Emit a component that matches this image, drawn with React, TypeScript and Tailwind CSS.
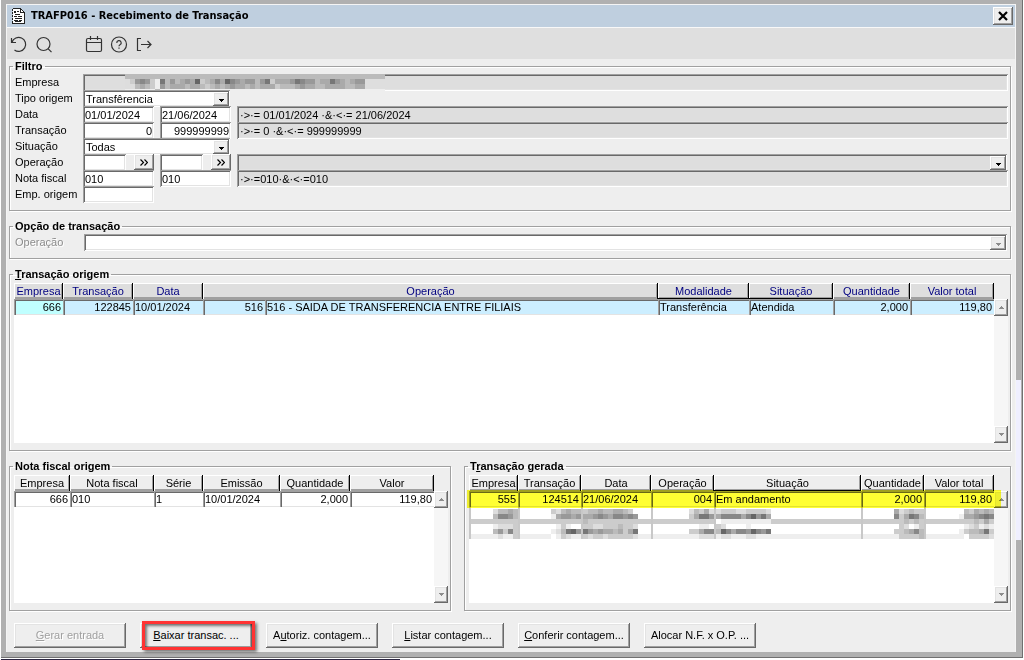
import { useState } from "react";
import type { ReactNode } from "react";
import clsx from "clsx";

const sunken =
  "shadow-[inset_1px_1px_0_#a0a0a0,inset_-1px_-1px_0_#ffffff,inset_2px_2px_0_#696969,inset_-2px_-2px_0_#e3e3e3]";
const raised =
  "shadow-[inset_-1px_-1px_0_#696969,inset_1px_1px_0_#ffffff,inset_-2px_-2px_0_#a0a0a0,inset_2px_2px_0_#e3e3e3]";
const cellEdge = "shadow-[inset_1px_1px_0_#a0a0a0,inset_2px_2px_0_#696969,inset_0_-1px_0_#e3e3e3]";
const iconButton = "flex size-[18px] items-center justify-center text-[#333333]";

type Column = {
  title: string;
  width?: string;
  span?: number;
  sorted?: boolean;
};

type Cell = {
  text: string;
  right?: boolean;
  tone?: string;
};

const originColumns: Column[] = [
  { title: "Empresa" },
  { title: "Transação" },
  { title: "Data" },
  { title: "Operação", span: 2 },
  { title: "Modalidade", sorted: true },
  { title: "Situação", sorted: true },
  { title: "Quantidade" },
  { title: "Valor total" },
];

const originWidths = ["w-[49px]", "w-[70px]", "w-[70px]", "w-[62px]", "", "w-[91px]", "w-[84px]", "w-[77px]", "w-[84px]"];

const originRow: Cell[] = [
  { text: "666", right: true, tone: "bg-[#c0ffff]" },
  { text: "122845", right: true },
  { text: "10/01/2024" },
  { text: "516", right: true },
  { text: "516 - SAIDA DE TRANSFERENCIA ENTRE FILIAIS" },
  { text: "Transferência" },
  { text: "Atendida" },
  { text: "2,000", right: true },
  { text: "119,80", right: true },
];

const invoiceColumns: Column[] = [
  { title: "Empresa" },
  { title: "Nota fiscal" },
  { title: "Série" },
  { title: "Emissão" },
  { title: "Quantidade" },
  { title: "Valor" },
];

const invoiceWidths = ["w-[56px]", "", "w-[49px]", "w-[77px]", "w-[70px]", "w-[84px]"];

const invoiceRow: Cell[] = [
  { text: "666", right: true },
  { text: "010" },
  { text: "1" },
  { text: "10/01/2024" },
  { text: "2,000", right: true },
  { text: "119,80", right: true },
];

const generatedColumns: Column[] = [
  { title: "Empresa" },
  { title: "Transação" },
  { title: "Data" },
  { title: "Operação" },
  { title: "Situação", sorted: true },
  { title: "Quantidade" },
  { title: "Valor total" },
];

const generatedWidths = ["w-[49px]", "w-[63px]", "w-[70px]", "w-[63px]", "", "w-[63px]", "w-[70px]"];

const generatedRow: Cell[] = [
  { text: "555", right: true },
  { text: "124514", right: true },
  { text: "21/06/2024" },
  { text: "004", right: true },
  { text: "Em andamento" },
  { text: "2,000", right: true },
  { text: "119,80", right: true },
];

// One character is one 5px block, read as a grey level from 0 (black) to f (white)
const companyMask = [
  "bbbbbbbbbbbbbbbbbbbbbbbbbbbbbbbbbbbbbbbbbbbbbbbbbbbb",
  "dc989ce7b9ba9a6cba8a689a99b97caaa97899baa79aba99....",
  "ddbabce9baaabaabcbaba9aababaaacbbba9aabbaaaabbaa....",
  "eeeeeebeeeeeeeeeeeeeeeeeeeeeeeeeeeeeeeeeeeeeeeeeeeee",
];

const rowMasks = [
  { right: true, rows: ["dbbab", "b889b", "ccccc", "edddc", "b9c8c", "edeec"] },
  { right: true, rows: ["cdbabb", "ea99a9", "cccccc", "feceff", "edb769", "fecdee"] },
  { right: false, rows: ["cbbabbaabc.", "aa989a88989", "bcccccccccc", "ccddcccbccd", "79a9aabaca7", "cdccdcccccd"] },
  { right: true, rows: ["dbcad", "ca779", "ccccc", "ffeef", "cca88", "eeddd"] },
  { right: false, rows: ["dcccddccccd", "a8888a8697a", "feeeeeeeeee", "cdffffeffff", "b68a8896897", "eddeeeddeee"] },
  { right: true, rows: ["adcbcc", "8ca78b", "ccbcbc", "fcdfec", "ccba8b", "eccccb"] },
  { right: true, rows: ["fbcabab", "eaa9878", "cccbcac", "fedcede", "ecbba7c", "efccccd"] },
];

const filterRow = "flex h-4 items-start";
const filterLabel = "w-[68px] shrink-0 leading-4";
const field = clsx(sunken, "h-[17px] bg-white px-[2px] pt-px text-[11px] leading-4 outline-none");
const readOnlyField = clsx(
  sunken,
  "h-[17px] min-w-0 flex-1 bg-[#dedede] px-[3px] pt-px text-[11px] leading-4 outline-none",
);

function Mosaic({ rows, className }: { rows: string[]; className?: string }) {
  const columns = Math.max(...rows.map((row) => row.length));

  return (
    <svg
      width={columns * 5}
      height={rows.length * 5}
      shapeRendering="crispEdges"
      className={clsx("block shrink-0", className)}
      aria-hidden="true"
    >
      {rows.flatMap((row, y) =>
        row.split("").map((level, x) =>
          level === "." ? null : (
            <rect key={`${x}-${y}`} x={x * 5} y={y * 5} width={5} height={5} fill={`#${level.repeat(6)}`} />
          ),
        ),
      )}
    </svg>
  );
}

function Group({ title, className, children }: { title: ReactNode; className?: string; children: ReactNode }) {
  return (
    <fieldset className="min-w-0 border border-[#a0a0a0] shadow-[1px_1px_0_#ffffff,inset_1px_1px_0_#ffffff]">
      <legend className="ml-[3px] h-3 px-[2px] text-[11px] leading-3 font-bold">{title}</legend>
      <div className={className}>{children}</div>
    </fieldset>
  );
}

function Arrow({ up, muted }: { up?: boolean; muted?: boolean }) {
  return (
    <svg
      width="5"
      height="3"
      viewBox="0 0 5 3"
      shapeRendering="crispEdges"
      className={muted ? "text-[#8c8c8c]" : "text-black"}
      aria-hidden="true"
    >
      <path d={up ? "M2 0h1v1h1v1h1v1H0V2h1V1h1z" : "M0 0h5v1H4v1H3v1H2V2H1V1H0z"} fill="currentColor" />
    </svg>
  );
}

function DropDown({
  id,
  options,
  className,
  disabled,
  label,
}: {
  id: string;
  options: string[];
  className?: string;
  disabled?: boolean;
  label?: string;
}) {
  return (
    <div className={clsx("grid h-[17px] items-stretch", className)}>
      <select
        id={id}
        aria-label={label}
        disabled={disabled}
        className={clsx(
          sunken,
          "col-start-1 row-start-1 h-[17px] w-full appearance-none bg-transparent px-[3px] text-[11px] leading-4 outline-none",
        )}
      >
        {options.map((option) => (
          <option key={option}>{option}</option>
        ))}
      </select>
      <span
        className={clsx(
          raised,
          "pointer-events-none col-start-1 row-start-1 mr-px mt-[2px] mb-px flex w-4 items-center justify-center justify-self-end bg-[#eeeeee] pt-[3px]",
        )}
      >
        <Arrow muted={disabled} />
      </span>
    </div>
  );
}

function ScrollBar() {
  return (
    <div className="flex w-[14px] shrink-0 flex-col justify-between bg-[#f6f6f6]">
      <button type="button" aria-label="Rolar para cima" className={clsx(raised, "flex h-[17px] items-center justify-center bg-[#eeeeee]")}>
        <Arrow up muted />
      </button>
      <button type="button" aria-label="Rolar para baixo" className={clsx(raised, "flex h-[17px] items-center justify-center bg-[#eeeeee]")}>
        <Arrow muted />
      </button>
    </div>
  );
}

function Grid({
  columns,
  widths,
  row,
  blue,
  height,
  children,
}: {
  columns: Column[];
  widths: string[];
  row: Cell[];
  blue?: boolean;
  height: string;
  children?: ReactNode;
}) {
  return (
    <div className={clsx("flex", height)}>
      <div className="min-w-0 flex-1 bg-[linear-gradient(#eeeeee_16px,#ffffff_16px)]">
        <table className="w-full table-fixed border-separate border-spacing-0">
          <colgroup>
            {widths.map((width, index) => (
              <col key={index} className={width} />
            ))}
          </colgroup>
          <thead>
            <tr className="h-4">
              {columns.map((column) => (
                <th
                  key={column.title}
                  colSpan={column.span}
                  className={clsx(
                    "h-4 overflow-hidden p-0 text-center font-normal leading-4 whitespace-nowrap",
                    blue ? "bg-[#dedede] text-[#000080]" : "bg-[#eeeeee]",
                    column.sorted
                      ? "shadow-[inset_-1px_-1px_0_#000000,inset_1px_1px_0_#ffffff,inset_-2px_-2px_0_#a0a0a0]"
                      : "shadow-[inset_-1px_0_0_#000000,inset_1px_1px_0_#ffffff,inset_-2px_-2px_0_#a0a0a0]",
                  )}
                >
                  {column.title}
                </th>
              ))}
            </tr>
          </thead>
          <tbody>
            <tr className="h-4">
              {row.map((cell, index) => (
                <td
                  key={index}
                  className={clsx(
                    cellEdge,
                    "h-4 overflow-hidden py-0 pr-[2px] pl-[2px] leading-4 whitespace-nowrap",
                    cell.right && "text-right",
                    cell.tone ?? (blue ? "bg-[#cceeff]" : "bg-white"),
                  )}
                >
                  {cell.text}
                </td>
              ))}
            </tr>
            {children}
          </tbody>
        </table>
      </div>
      <div className="flex pt-4">
        <ScrollBar />
      </div>
    </div>
  );
}

function CommandButton({ children, disabled }: { children: ReactNode; disabled?: boolean }) {
  return (
    <button
      type="button"
      disabled={disabled}
      className={clsx(
        raised,
        "h-[25px] w-28 bg-[#eeeeee] pb-px text-[11px]",
        disabled ? "text-[#a0a0a0] [text-shadow:1px_1px_0_#ffffff]" : "text-black",
      )}
    >
      {children}
    </button>
  );
}

function TitleBar() {
  return (
    <header className="flex h-[22px] items-center bg-[#bfcfdf] pr-[2px] pl-[5px]">
      <svg width="14" height="16" viewBox="0 0 14 16" shapeRendering="crispEdges" aria-hidden="true">
        <path d="M1 1h8l4 4v11H1z" fill="#fff" />
        <path d="M1 0h8v1H1zM0 1h1v2H0zM0 4h1v2H0zM0 7h1v2H0zM0 10h1v2H0zM0 13h1v3H0zM1 15h12v1H1zM12 5h1v11h-1zM9 1h1v1H9zM10 2h1v1h-1zM11 3h1v1h-1zM8 1h1v4H8zM8 4h5v1H8z" fill="#222" />
        <path d="M2 3h2v2H2zM5 3h2v1H5zM3 6h5v1H3zM2 8h3v1H2zM6 8h4v1H6zM3 10h7v1H3zM2 12h4v1H2zM7 12h3v1H7zM3 13h6v1H3z" fill="#222" />
      </svg>
      <h1 className="ml-[5px] flex-1 font-['DejaVu_Sans_Condensed','DejaVu_Sans',sans-serif] text-[11px] leading-4 font-bold">
        TRAFP016 - Recebimento de Transação
      </h1>
      <button type="button" aria-label="Fechar" className={clsx(raised, "flex h-[18px] w-5 items-center justify-center bg-[#eeeeee]")}>
        <svg width="10" height="10" viewBox="0 0 10 10" aria-hidden="true">
          <path d="M1 1l8 8M9 1L1 9" stroke="#000" strokeWidth="2.2" />
        </svg>
      </button>
    </header>
  );
}

function ToolBar() {
  return (
    <nav className="flex h-[31px] items-center gap-[7px] bg-[#dfdfdf] pt-[3px] pl-[3px]">
      <button type="button" aria-label="Atualizar" className={iconButton}>
        <svg width="18" height="18" viewBox="0 0 18 18" fill="none" stroke="currentColor" strokeWidth="1.2">
          <path d="M1.500 2v4.500H6M2 6.200A7 7 0 1 1 4.500 14" />
        </svg>
      </button>
      <button type="button" aria-label="Pesquisar" className={iconButton}>
        <svg width="18" height="18" viewBox="0 0 18 18" fill="none" stroke="currentColor" strokeWidth="1.2">
          <circle cx="8.500" cy="8" r="6.500" />
          <path d="M13 12.700l3.500 3.500" />
        </svg>
      </button>
      <button type="button" aria-label="Calendário" className={clsx(iconButton, "ml-[25px]")}>
        <svg width="18" height="18" viewBox="0 0 18 18" fill="none" stroke="currentColor" strokeWidth="1.2">
          <rect x="1.500" y="2.500" width="15" height="13" rx="1.500" />
          <path d="M1.500 6.500h15M5.500 0v4M12.500 0v4" />
        </svg>
      </button>
      <button type="button" aria-label="Ajuda" className={iconButton}>
        <svg width="18" height="18" viewBox="0 0 18 18" fill="none" stroke="currentColor" strokeWidth="1.2">
          <circle cx="9" cy="8.500" r="7.500" />
          <path d="M6.800 7a2.200 2.200 0 1 1 3.200 1.800c-.7.400-1 .7-1 1.500M9 11.500v1.300" />
        </svg>
      </button>
      <button type="button" aria-label="Sair" className={iconButton}>
        <svg width="18" height="18" viewBox="0 0 18 18" fill="none" stroke="currentColor" strokeWidth="1.2">
          <path d="M6 2.500H2.500v12H6M6 8.500h10M12.500 5L16 8.500 12.500 12" />
        </svg>
      </button>
    </nav>
  );
}

function Range({
  id,
  label,
  from,
  to,
  result,
  right,
}: {
  id: string;
  label: string;
  from: string;
  to: string;
  result: string;
  right?: boolean;
}) {
  const [range, setRange] = useState({ from, to });

  return (
    <div className={filterRow}>
      <label htmlFor={id} className={filterLabel}>
        {label}
      </label>
      <input
        id={id}
        value={range.from}
        onChange={(event) => setRange({ ...range, from: event.target.value })}
        className={clsx(field, "w-[71px]", right && "text-right")}
      />
      <input
        aria-label={`${label} final`}
        value={range.to}
        onChange={(event) => setRange({ ...range, to: event.target.value })}
        className={clsx(field, "mx-[6px] w-[71px]", right && "text-right")}
      />
      <input aria-label={`${label} critério`} readOnly value={result} className={readOnlyField} />
    </div>
  );
}

function Lookup({ id, label }: { id: string; label?: string }) {
  return (
    <div className="mr-[6px] flex w-[71px] justify-between">
      <input id={id} aria-label={label} className={clsx(field, "w-[43px]")} />
      <button type="button" aria-label="Procurar" className={clsx(raised, "flex h-4 w-5 items-center justify-center bg-[#eeeeee]")}>
        <svg width="8" height="7" viewBox="0 0 8 7" fill="none" stroke="#000" strokeWidth="1.2" aria-hidden="true">
          <path d="M.500.500l3 3-3 3M4.500.500l3 3-3 3" />
        </svg>
      </button>
    </div>
  );
}

function FilterGroup() {
  return (
    <Group title="Filtro" className="pt-[2px] pr-[2px] pb-2 pl-[5px]">
      <div className={filterRow}>
        <span className={filterLabel}>Empresa</span>
        <div className={clsx(sunken, "flex h-[17px] flex-1 bg-[#dedede] pl-[42px]")}>
          <Mosaic rows={companyMask} className="h-[18px]" />
        </div>
      </div>
      <div className={filterRow}>
        <label htmlFor="tipo" className={filterLabel}>
          Tipo origem
        </label>
        <DropDown id="tipo" options={["Transfêrencia"]} className="w-[147px] bg-white" />
      </div>
      <Range id="data" label="Data" from="01/01/2024" to="21/06/2024" result="·>·= 01/01/2024 ·&·<·= 21/06/2024" />
      <Range id="transacao" label="Transação" from="0" to="999999999" result="·>·= 0 ·&·<·= 999999999" right />
      <div className={filterRow}>
        <label htmlFor="situacao" className={filterLabel}>
          Situação
        </label>
        <DropDown id="situacao" options={["Todas"]} className="w-[147px] bg-white" />
      </div>
      <div className={filterRow}>
        <label htmlFor="operacao" className={filterLabel}>
          Operação
        </label>
        <Lookup id="operacao" />
        <Lookup id="operacao-final" label="Operação final" />
        <DropDown id="operacao-lista" label="Lista de operações" options={[""]} className="mr-px flex-1 bg-[#dedede]" />
      </div>
      <Range id="nota" label="Nota fiscal" from="010" to="010" result="·>·=010·&·<·=010" />
      <div className={filterRow}>
        <label htmlFor="emp-origem" className={filterLabel}>
          Emp. origem
        </label>
        <input id="emp-origem" className={clsx(field, "w-[71px]")} />
      </div>
    </Group>
  );
}

export default function App() {
  return (
    <div className="flex min-h-screen flex-col bg-white px-px font-['Liberation_Sans',Arial,sans-serif] text-[11px] leading-4 text-black">
      <div className="flex border-r border-b border-[#707070] bg-[#b0b0b0] pt-1 pb-[5px] pl-[5px]">
        <main className="min-w-0 flex-1 border border-b-0 border-[#f4f4f4] bg-[#eeeeee]">
          <TitleBar />
          <div className="h-px bg-[#f8f8f8]" />
          <ToolBar />

          <div className="flex flex-col gap-[9px] pt-px pr-1 pl-[2px]">
            <FilterGroup />

            <Group title="Opção de transação" className="pt-[2px] pr-[3px] pb-2 pl-[5px]">
              <div className={filterRow}>
                <label htmlFor="opcao" className={clsx(filterLabel, "text-[#8c8c8c] [text-shadow:1px_1px_0_#ffffff]")}>
                  Operação
                </label>
                <DropDown id="opcao" options={[""]} disabled className="ml-px flex-1 bg-white" />
              </div>
            </Group>

            <Group
              title={
                <>
                  <span className="underline">T</span>ransação origem
                </>
              }
              className="pt-[3px] pr-[2px] pb-[7px] pl-1"
            >
              <Grid columns={originColumns} widths={originWidths} row={originRow} blue height="h-40" />
            </Group>

            <div className="grid grid-cols-[442fr_547fr] gap-[13px]">
              <Group title="Nota fiscal origem" className="pt-[3px] pr-[2px] pb-[7px] pl-1">
                <Grid columns={invoiceColumns} widths={invoiceWidths} row={invoiceRow} height="h-32" />
              </Group>

              <Group
                title={
                  <>
                    T<span className="underline">r</span>ansação gerada
                  </>
                }
                className="pt-[3px] pr-[2px] pb-[7px] pl-1"
              >
                <div className="relative">
                  <Grid columns={generatedColumns} widths={generatedWidths} row={generatedRow} height="h-32">
                    <tr>
                      {rowMasks.map((mask, index) => (
                        <td
                          key={index}
                          className="overflow-hidden border-l-2 border-[#c8c8c8] bg-[linear-gradient(#ffffff_12px,#cccccc_12px,#cccccc_17px,#ffffff_17px,#ffffff_27px,#eeeeee_27px)] p-0 pt-[2px]"
                        >
                          <div className={clsx("flex", mask.right && "justify-end")}>
                            <Mosaic rows={mask.rows} />
                          </div>
                        </td>
                      ))}
                    </tr>
                  </Grid>
                  <div className="pointer-events-none absolute top-[15px] right-[7px] -left-[2px] h-[18px] bg-[#ffff33] mix-blend-multiply" />
                </div>
              </Group>
            </div>
          </div>

          <div className="flex gap-[14px] pt-3 pb-1 pl-[7px]">
            <CommandButton disabled>
              <span className="underline">G</span>erar entrada
            </CommandButton>
            <div className="relative">
              <CommandButton>
                <span className="underline">B</span>aixar transac. ...
              </CommandButton>
              <div className="pointer-events-none absolute -inset-y-[2px] -right-[3px] left-[2px] border-[3px] border-[#ff3333] shadow-[2px_2px_3px_#00000080,inset_2px_2px_3px_#00000080]" />
            </div>
            <CommandButton>
              A<span className="underline">u</span>toriz. contagem...
            </CommandButton>
            <CommandButton>
              <span className="underline">L</span>istar contagem...
            </CommandButton>
            <CommandButton>
              <span className="underline">C</span>onferir contagem...
            </CommandButton>
            <CommandButton>Alocar N.F. x O.P. ...</CommandButton>
          </div>
        </main>
        <div className="w-[6px] shrink-0 pr-px">
          <div className="mt-[376px] h-40 bg-[#efefff]" />
        </div>
      </div>
      <div className="mt-px h-px w-[39%] bg-[#2a2440]" />
    </div>
  );
}
